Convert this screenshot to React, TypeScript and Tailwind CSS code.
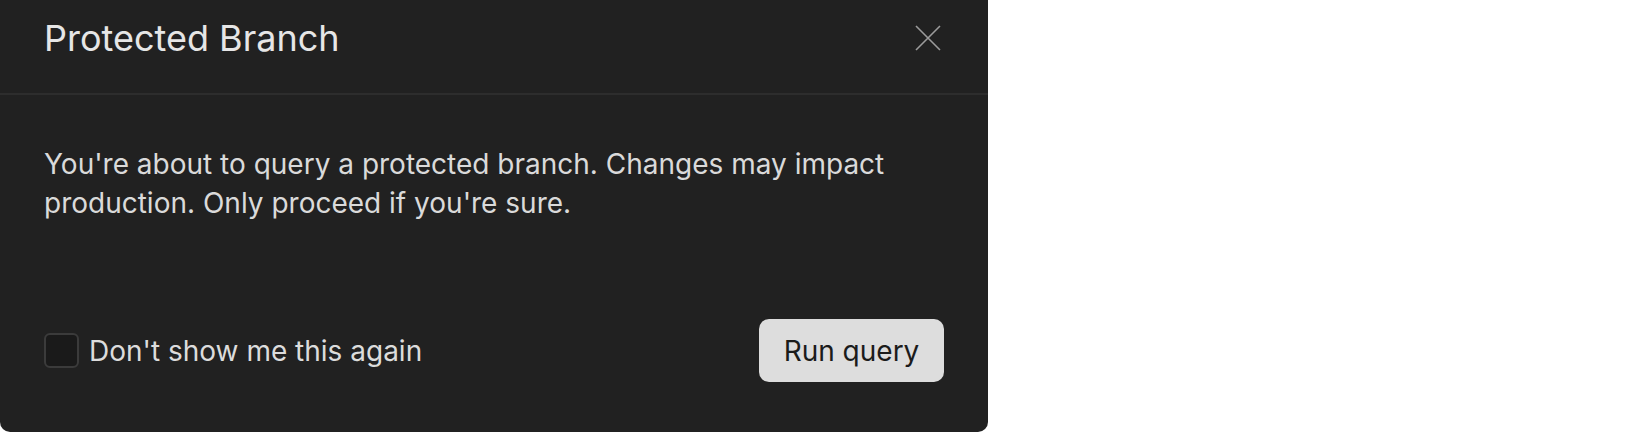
const App = () => {
  return (
    <div className="w-[1638px] h-[432px] bg-white flex" style={{ fontFamily: "Inter, 'Noto Sans', sans-serif" }}>
      <div className="w-[988px] h-[432px] bg-[#212121] rounded-b-[10px] flex flex-col">
        <div className="h-[95px] border-b-2 border-[#2d2d2d] flex items-start justify-between pl-[44px] pr-[47px] pt-[18px]">
          <h2 className="text-[36px] leading-[40px] text-[#e6e6e6] font-normal">Protected Branch</h2>
          <button className="mt-[7px] text-[#9b9b9b]">
            <svg width="26" height="26" viewBox="0 0 26 26" fill="none" stroke="currentColor" strokeWidth="1.6">
              <path d="M1 1L25 25M25 1L1 25" />
            </svg>
          </button>
        </div>
        <div className="pl-[44px] pr-[44px] pt-[50px]">
          <p className="text-[28px] leading-[39px] text-[#dadada]">
            You're about to query a protected branch. Changes may impact
            <br />
            production. Only proceed if you're sure.
          </p>
        </div>
        <div className="mt-auto mb-[50px] pl-[44px] pr-[44px] flex items-center justify-between">
          <label className="flex items-center gap-[10px]">
            <span className="w-[35px] h-[35px] rounded-[6px] bg-[#1a1a1a] border-2 border-[#3b3b3b]" />
            <span className="text-[28px] leading-[36px] text-[#dcdcdc]">Don't show me this again</span>
          </label>
          <button className="w-[185px] h-[63px] rounded-[10px] bg-[#dddddd] text-[#1b1b1b] text-[28px] leading-[36px]">
            Run query
          </button>
        </div>
      </div>
    </div>
  );
};

export default App;
